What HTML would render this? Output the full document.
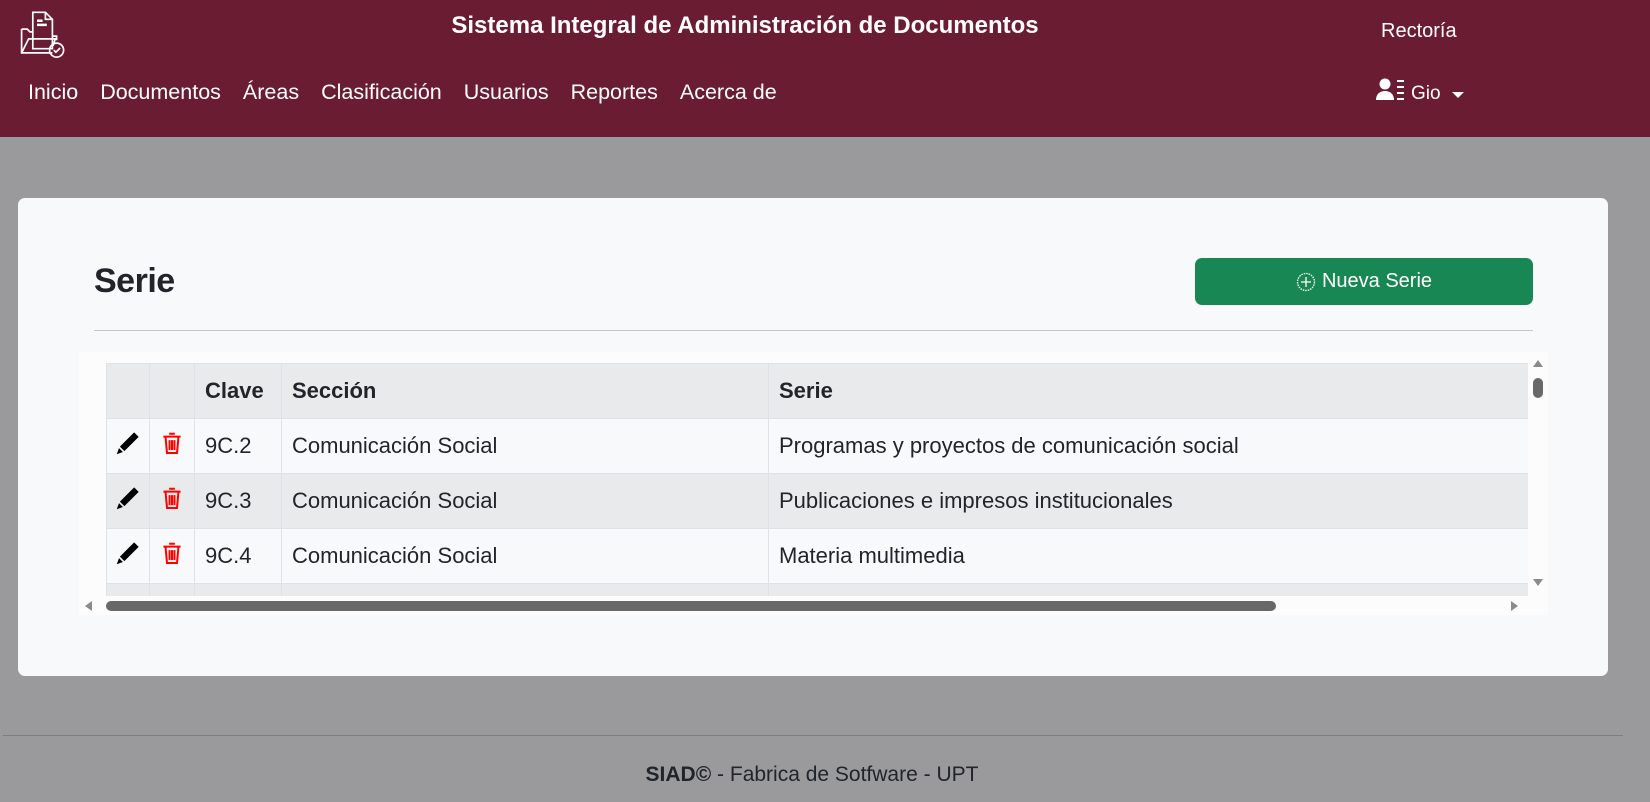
<!DOCTYPE html>
<html><head><meta charset="utf-8"><style>
*{box-sizing:border-box;margin:0;padding:0}
body{width:1650px;height:802px;background:#9a9a9c;font-family:"Segoe UI","Liberation Sans",sans-serif;position:relative;overflow:hidden;color:#212529}
.hdr{position:absolute;left:0;top:0;width:1650px;height:137px;background:#6a1c33;color:#fff}
.a{position:absolute;white-space:nowrap}
.nav span{margin-right:22px}
.card{position:absolute;left:18px;top:198px;width:1590px;height:478px;background:#f8f9fa;border-radius:7px}
.btn{position:absolute;left:1195px;top:258px;width:338px;height:47px;background:#198754;border-radius:7px;color:#fff;font-size:20px;display:flex;align-items:center;justify-content:center;gap:6px}
.wrap{position:absolute;left:79px;top:352px;width:1469px;height:263px;background:#fcfcfc;overflow:hidden}
table{position:absolute;left:27px;top:11px;border-collapse:collapse;font-size:22px}
td,th{border:1px solid #dee2e6;height:55px;padding:0 10px;text-align:left;white-space:nowrap}
th{font-weight:bold;background:#e9eaec}
tr.g td{background:#e9eaec}
tr.w td{background:#f8f9fa}
td.i{text-align:center;padding:0}
</style></head><body>
<div class="hdr">
<svg class="a" style="left:16px;top:8px" width="56" height="52" viewBox="0 0 40 37" fill="none" stroke="#fff" stroke-width="1.2"><path d="M4 15V32H26M4 15h4l2 2h2"/><path d="M12 3h9l5 5v21H12z M21 3v5h5"/><path d="M15 9h4M15 12h7" stroke-width="1.8"/><path d="M26 20h3v3M4 32l5-10h19l-1.5 5"/><circle cx="29" cy="30" r="5"/><path d="M27 30l1.5 1.5 3-3"/></svg>
<div class="a" style="left:0;width:1490px;text-align:center;top:12px;font-size:24px;font-weight:bold">Sistema Integral de Administración de Documentos</div>
<div class="a" style="left:1381px;top:20px;font-size:20px">Rectoría</div>
<div class="a nav" style="left:28px;top:80px;font-size:21.5px"><span>Inicio</span><span>Documentos</span><span>Áreas</span><span>Clasificación</span><span>Usuarios</span><span>Reportes</span><span>Acerca de</span></div>
<svg class="a" style="left:1376px;top:78px" width="32" height="24" viewBox="0 0 32 24" fill="#fff"><circle cx="9" cy="6" r="5.5"/><path d="M0 22c0-6 4-9 9-9s9 3 9 9z"/><rect x="21" y="2" width="7" height="2"/><rect x="21" y="8" width="7" height="2"/><rect x="21" y="14" width="7" height="2"/><rect x="21" y="20" width="7" height="2"/></svg>
<div class="a" style="left:1411px;top:83px;font-size:19px">Gio</div>
<div class="a" style="left:1452px;top:92px;border-left:6px solid transparent;border-right:6px solid transparent;border-top:6px solid #fff"></div>
</div>
<div class="card"></div>
<div class="a" style="left:94px;top:262px;font-size:34px;font-weight:bold;letter-spacing:-0.5px">Serie</div>
<div class="btn"><svg width="20" height="20" viewBox="0 0 20 20" fill="none" stroke="#fff" stroke-width="1.3"><circle cx="10" cy="10" r="8.5" stroke-dasharray="1.5 1"/><path d="M10 5v10M5 10h10"/></svg>Nueva Serie</div>
<div class="a" style="left:94px;top:330px;width:1439px;height:1px;background:#c4c5c7"></div>
<div class="wrap">
<table>
<tr><th style="width:43px"></th><th style="width:45px"></th><th style="width:87px">Clave</th><th style="width:487px">Sección</th><th style="width:760px">Serie</th></tr>
<tr class="w"><td class="i"><svg width="24" height="24" viewBox="0 0 16 16"><path d="M12.1.9l3 3-9.5 9.5-3-3zM2 11.4l2.6 2.6L.5 15.5z"/></svg></td><td class="i"><svg width="20" height="24" viewBox="0 0 14 16" fill="none" stroke="#f00" stroke-width="1.4"><path d="M5 1.5h4M1 3.5h12"/><path d="M2.5 4l1 11h7l1-11M5.3 6v7M7 6v7M8.7 6v7"/></svg></td><td>9C.2</td><td>Comunicación Social</td><td>Programas y proyectos de comunicación social</td></tr>
<tr class="g"><td class="i"><svg width="24" height="24" viewBox="0 0 16 16"><path d="M12.1.9l3 3-9.5 9.5-3-3zM2 11.4l2.6 2.6L.5 15.5z"/></svg></td><td class="i"><svg width="20" height="24" viewBox="0 0 14 16" fill="none" stroke="#f00" stroke-width="1.4"><path d="M5 1.5h4M1 3.5h12"/><path d="M2.5 4l1 11h7l1-11M5.3 6v7M7 6v7M8.7 6v7"/></svg></td><td>9C.3</td><td>Comunicación Social</td><td>Publicaciones e impresos institucionales</td></tr>
<tr class="w"><td class="i"><svg width="24" height="24" viewBox="0 0 16 16"><path d="M12.1.9l3 3-9.5 9.5-3-3zM2 11.4l2.6 2.6L.5 15.5z"/></svg></td><td class="i"><svg width="20" height="24" viewBox="0 0 14 16" fill="none" stroke="#f00" stroke-width="1.4"><path d="M5 1.5h4M1 3.5h12"/><path d="M2.5 4l1 11h7l1-11M5.3 6v7M7 6v7M8.7 6v7"/></svg></td><td>9C.4</td><td>Comunicación Social</td><td>Materia multimedia</td></tr>
<tr class="g"><td></td><td></td><td></td><td></td><td></td></tr>
</table>
<div class="a" style="left:0;top:244px;width:1469px;height:19px;background:#fcfcfc"></div>
<div class="a" style="left:27px;top:249px;width:1170px;height:10px;background:#686868;border-radius:5px"></div>
<div class="a" style="left:6px;top:249px;border-top:5px solid transparent;border-bottom:5px solid transparent;border-right:7px solid #8a8a8a"></div>
<div class="a" style="left:1432px;top:249px;border-top:5px solid transparent;border-bottom:5px solid transparent;border-left:7px solid #8a8a8a"></div>
<div class="a" style="left:1449px;top:0;width:20px;height:244px;background:#fcfcfc"></div>
<div class="a" style="left:1454px;top:8px;border-left:5px solid transparent;border-right:5px solid transparent;border-bottom:7px solid #8a8a8a"></div>
<div class="a" style="left:1454px;top:26px;width:10px;height:20px;background:#686868;border-radius:5px"></div>
<div class="a" style="left:1454px;top:227px;border-left:5px solid transparent;border-right:5px solid transparent;border-top:7px solid #8a8a8a"></div>
</div>
<div class="a" style="left:3px;top:735px;width:1620px;height:1px;background:#7e7e80"></div>
<div class="a" style="left:0;width:1624px;text-align:center;top:763px;font-size:21px"><b>SIAD©</b> - Fabrica de Sotfware - UPT</div>
</body></html>
